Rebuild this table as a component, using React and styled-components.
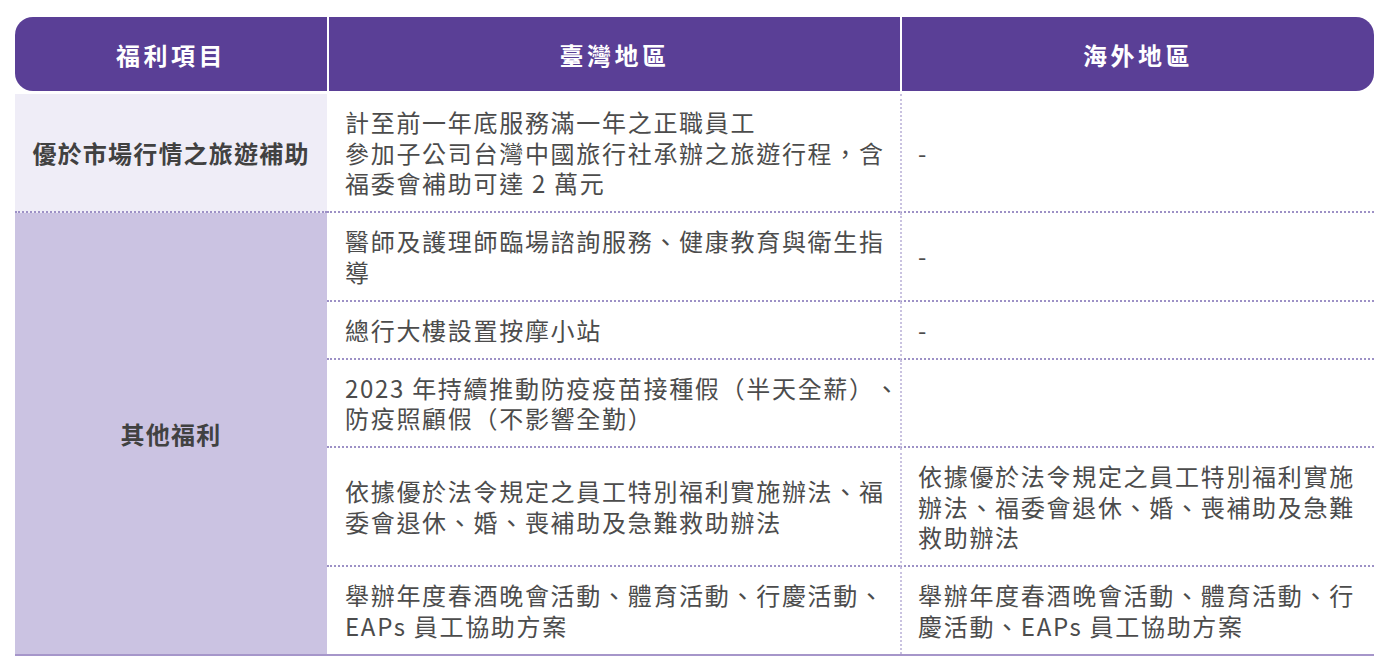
import React from 'react'
import styled, { createGlobalStyle } from 'styled-components'

const GlobalStyle = createGlobalStyle`
  html, body {
    margin: 0;
    padding: 0;
    background: #ffffff;
  }
  body {
    font-family: "Noto Sans CJK TC", "Noto Sans", sans-serif;
    text-spacing-trim: space-all;
  }
`

const Page = styled.div`
  padding: 17px 0 0 15px;
  width: 1359px;
`

const HeadRow = styled.div`
  display: grid;
  grid-template-columns: 312px 571px 472px;
  column-gap: 2px;
  height: 74px;
`

const HeadCell = styled.div`
  background: #5a3f96;
  color: #ffffff;
  font-size: 24px;
  font-weight: 700;
  letter-spacing: 3.5px;
  display: flex;
  align-items: center;
  justify-content: center;
  border-radius: ${(p) =>
    p.side === 'left' ? '18px 0 0 18px' : p.side === 'right' ? '0 18px 18px 0' : '0'};
`

const Body = styled.div`
  display: grid;
  grid-template-columns: 312px 573px 474px;
  margin-top: 3px;
  border-bottom: 2px solid #a696ca;
`

const Category = styled.div`
  grid-row: span ${(p) => p.span || 1};
  background: ${(p) => (p.light ? '#efedf7' : '#cbc3e2')};
  border-bottom: ${(p) => (p.dotted ? '2px dotted #9d91c6' : 'none')};
  color: #414141;
  font-size: 24px;
  font-weight: 700;
  letter-spacing: 1.2px;
  display: flex;
  align-items: center;
  justify-content: center;
`

const Cell = styled.div`
  padding: 13px 16px 12.5px ${(p) => (p.overseas ? '16px' : '18px')};
  border-bottom: ${(p) => (p.last ? 'none' : '2px dotted #9d91c6')};
  border-left: ${(p) => (p.overseas ? '2px dotted #c9c2e0' : 'none')};
  display: flex;
  flex-direction: column;
  justify-content: center;
  color: #4c4c4c;
  font-size: 24px;
  line-height: 30.5px;
  letter-spacing: 1.7px;
  min-height: 30.5px;
`

const Line = styled.span`
  display: block;
  white-space: nowrap;
`

const rows = [
  {
    tw: ['醫師及護理師臨場諮詢服務、健康教育與衛生指', '導'],
    os: ['-'],
  },
  {
    tw: ['總行大樓設置按摩小站'],
    os: ['-'],
  },
  {
    tw: ['2023 年持續推動防疫疫苗接種假（半天全薪）、', '防疫照顧假（不影響全勤）'],
    os: [],
  },
  {
    tw: ['依據優於法令規定之員工特別福利實施辦法、福', '委會退休、婚、喪補助及急難救助辦法'],
    os: ['依據優於法令規定之員工特別福利實施', '辦法、福委會退休、婚、喪補助及急難', '救助辦法'],
  },
  {
    tw: ['舉辦年度春酒晚會活動、體育活動、行慶活動、', 'EAPs 員工協助方案'],
    os: ['舉辦年度春酒晚會活動、體育活動、行', '慶活動、EAPs 員工協助方案'],
  },
]

const Lines = ({ items }) => items.map((t, i) => <Line key={i}>{t}</Line>)

const App = () => {
  return (
    <Page>
      <GlobalStyle />
      <HeadRow>
        <HeadCell side="left">福利項目</HeadCell>
        <HeadCell>臺灣地區</HeadCell>
        <HeadCell side="right">海外地區</HeadCell>
      </HeadRow>
      <Body>
        <Category light dotted>優於市場行情之旅遊補助</Category>
        <Cell>
          <Lines
            items={[
              '計至前一年底服務滿一年之正職員工',
              '參加子公司台灣中國旅行社承辦之旅遊行程，含',
              '福委會補助可達 2 萬元',
            ]}
          />
        </Cell>
        <Cell overseas>
          <Line>-</Line>
        </Cell>

        <Category span={5}>其他福利</Category>
        {rows.map((r, i) => (
          <React.Fragment key={i}>
            <Cell last={i === rows.length - 1}>
              <Lines items={r.tw} />
            </Cell>
            <Cell overseas last={i === rows.length - 1}>
              <Lines items={r.os} />
            </Cell>
          </React.Fragment>
        ))}
      </Body>
    </Page>
  )
}

export default App
